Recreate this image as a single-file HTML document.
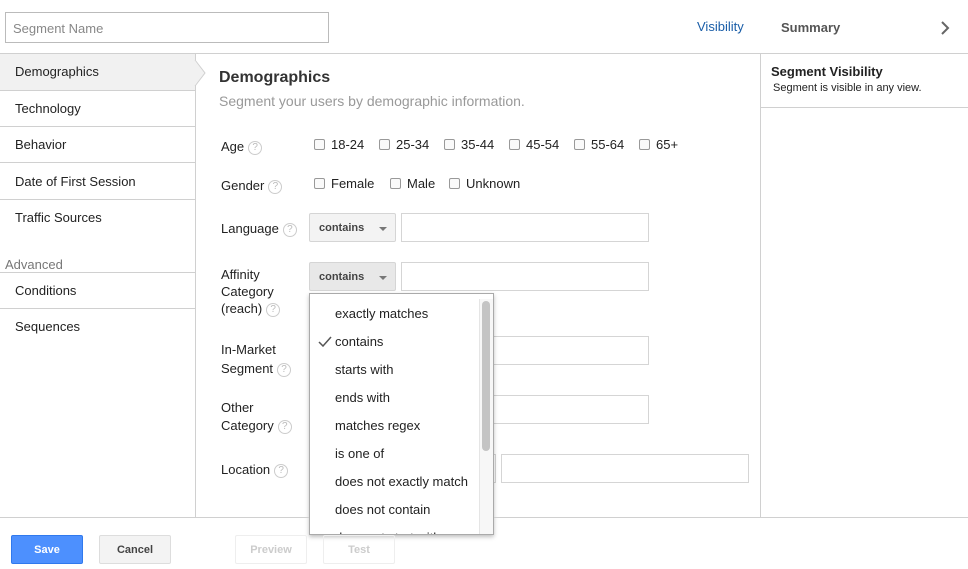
<!DOCTYPE html>
<html><head><meta charset="utf-8"><style>
*{box-sizing:border-box;margin:0;padding:0}
body{width:968px;height:569px;position:relative;background:#fff;font-family:"Liberation Sans",Arial,sans-serif;font-size:13px;color:#222;overflow:hidden}
.a{position:absolute}
.hl{position:absolute;height:1px;background:#d0d0d0}
.vl{position:absolute;width:1px;background:#d0d0d0}
.nav{position:absolute;left:15px;font-size:13px;color:#222}
.lbl{position:absolute;left:221px;font-size:13px;color:#222;line-height:18px}
.q{display:inline-block;width:14px;height:14px;border:1px solid #ccc;border-radius:50%;font-size:10px;color:#bbb;text-align:center;line-height:12px;vertical-align:middle;margin-left:4px}
.cb{position:absolute;font-size:13px}
.cb i{display:inline-block;width:11px;height:11px;border:1px solid #999;border-radius:2px;vertical-align:-1px;margin-right:6px;background:#fafafa}
.sel{position:absolute;left:309px;width:87px;height:29px;background:#f3f3f3;border:1px solid #d5d5d5;border-radius:2px;font-weight:bold;font-size:11px;color:#444;padding:8px 0 0 9px}
.sel:after{content:"";position:absolute;right:8px;top:13px;border:4px solid transparent;border-top-color:#777}
.inp{position:absolute;height:29px;border:1px solid #d5d5d5}
.dd{position:absolute;left:309px;top:293px;width:185px;height:242px;background:#fff;border:1px solid #aaa;box-shadow:0 2px 4px rgba(0,0,0,.25);overflow:hidden}
.dd div{position:absolute;left:25px;font-size:13px;color:#222}
.btn{position:absolute;top:535px;height:29px;border:1px solid #ddd;border-radius:2px;font-size:11px;font-weight:bold;text-align:center;line-height:28px}
</style></head><body>
<div class="a" style="left:5px;top:12px;width:324px;height:31px;border:1px solid #bbb;color:#888;padding:8px 0 0 7px;font-size:13px">Segment Name</div>
<div class="a" style="left:697px;top:19px;color:#1a5ea8;font-size:13px">Visibility</div>
<div class="a" style="left:781px;top:20px;color:#555;font-weight:bold;font-size:13px">Summary</div>
<svg class="a" style="left:939px;top:20px" width="12" height="16"><path d="M3 2 L9 8 L3 14" stroke="#666" stroke-width="2" fill="none"/></svg>
<div class="hl" style="left:0;top:53px;width:968px"></div>
<div class="a" style="left:0;top:54px;width:195px;height:36px;background:#f1f1f1"></div>
<svg class="a" style="left:194px;top:60px" width="14" height="26"><path d="M0 0 L11 13 L0 26 Z" fill="#f1f1f1"/><path d="M1 0 L11 13 L1 26" stroke="#d0d0d0" fill="none"/></svg>
<div class="vl" style="left:195px;top:54px;height:6px"></div>
<div class="vl" style="left:195px;top:85px;height:432px"></div>
<div class="nav" style="top:64px">Demographics</div>
<div class="hl" style="left:0;top:90px;width:195px"></div>
<div class="nav" style="top:101px">Technology</div>
<div class="hl" style="left:0;top:126px;width:195px"></div>
<div class="nav" style="top:137px">Behavior</div>
<div class="hl" style="left:0;top:162px;width:195px"></div>
<div class="nav" style="top:174px">Date of First Session</div>
<div class="hl" style="left:0;top:199px;width:195px"></div>
<div class="nav" style="top:210px">Traffic Sources</div>
<div class="a" style="left:5px;top:257px;color:#777">Advanced</div>
<div class="hl" style="left:0;top:272px;width:195px"></div>
<div class="nav" style="top:283px">Conditions</div>
<div class="hl" style="left:0;top:308px;width:195px"></div>
<div class="nav" style="top:319px">Sequences</div>
<div class="vl" style="left:760px;top:54px;height:463px"></div>
<div class="a" style="left:771px;top:64px;font-weight:bold;font-size:13px;color:#222">Segment Visibility</div>
<div class="a" style="left:773px;top:82px;font-size:11px;color:#222">Segment is visible in any view.</div>
<div class="hl" style="left:761px;top:107px;width:207px"></div>
<div class="a" style="left:219px;top:69px;font-weight:bold;font-size:16px;color:#333">Demographics</div>
<div class="a" style="left:219px;top:93px;font-size:14px;color:#999">Segment your users by demographic information.</div>
<div class="lbl" style="top:138px">Age<span class="q">?</span></div>
<div class="cb" style="left:314px;top:137px"><i></i>18-24</div>
<div class="cb" style="left:379px;top:137px"><i></i>25-34</div>
<div class="cb" style="left:444px;top:137px"><i></i>35-44</div>
<div class="cb" style="left:509px;top:137px"><i></i>45-54</div>
<div class="cb" style="left:574px;top:137px"><i></i>55-64</div>
<div class="cb" style="left:639px;top:137px"><i></i>65+</div>
<div class="lbl" style="top:177px">Gender<span class="q">?</span></div>
<div class="cb" style="left:314px;top:176px"><i></i>Female</div>
<div class="cb" style="left:390px;top:176px"><i></i>Male</div>
<div class="cb" style="left:449px;top:176px"><i></i>Unknown</div>
<div class="lbl" style="top:220px">Language<span class="q">?</span></div>
<div class="sel" style="top:213px">contains</div>
<div class="inp" style="left:401px;top:213px;width:248px"></div>
<div class="lbl" style="top:266px;line-height:17px">Affinity<br>Category<br>(reach)<span class="q">?</span></div>
<div class="sel" style="top:262px;background:#e8e8e8">contains</div>
<div class="inp" style="left:401px;top:262px;width:248px"></div>
<div class="lbl" style="top:340px;line-height:19px">In-Market<br>Segment<span class="q">?</span></div>
<div class="inp" style="left:401px;top:336px;width:248px"></div>
<div class="lbl" style="top:399px">Other<br>Category<span class="q">?</span></div>
<div class="inp" style="left:401px;top:395px;width:248px"></div>
<div class="lbl" style="top:461px">Location<span class="q">?</span></div>
<div class="inp" style="left:401px;top:454px;width:95px"></div>
<div class="inp" style="left:501px;top:454px;width:248px"></div>
<div class="dd">
<div style="top:12px">exactly matches</div>
<svg style="position:absolute;left:8px;top:42px" width="14" height="11"><path d="M1 6 L5 10 L13 1" stroke="#555" stroke-width="1.5" fill="none"/></svg>
<div style="top:40px">contains</div>
<div style="top:68px">starts with</div>
<div style="top:96px">ends with</div>
<div style="top:124px">matches regex</div>
<div style="top:152px">is one of</div>
<div style="top:180px">does not exactly match</div>
<div style="top:208px">does not contain</div>
<div style="top:236px">does not start with</div>
<span style="position:absolute;left:169px;top:5px;width:15px;height:237px;background:#f7f7f7;border-left:1px solid #e5e5e5"></span>
<span style="position:absolute;left:172px;top:7px;width:8px;height:150px;background:#c4c4c4;border-radius:4px"></span>
</div>
<div class="hl" style="left:0;top:517px;width:309px"></div>
<div class="hl" style="left:494px;top:517px;width:474px"></div>
<div class="btn" style="left:11px;width:72px;background:#4d90fe;border-color:#3079ed;color:#fff">Save</div>
<div class="btn" style="left:99px;width:72px;background:#f3f3f3;color:#444">Cancel</div>
<div class="btn" style="left:235px;width:72px;color:#ccc;border-color:#eee">Preview</div>
<div class="btn" style="left:323px;width:72px;color:#ccc;border-color:#eee">Test</div>
</body></html>
